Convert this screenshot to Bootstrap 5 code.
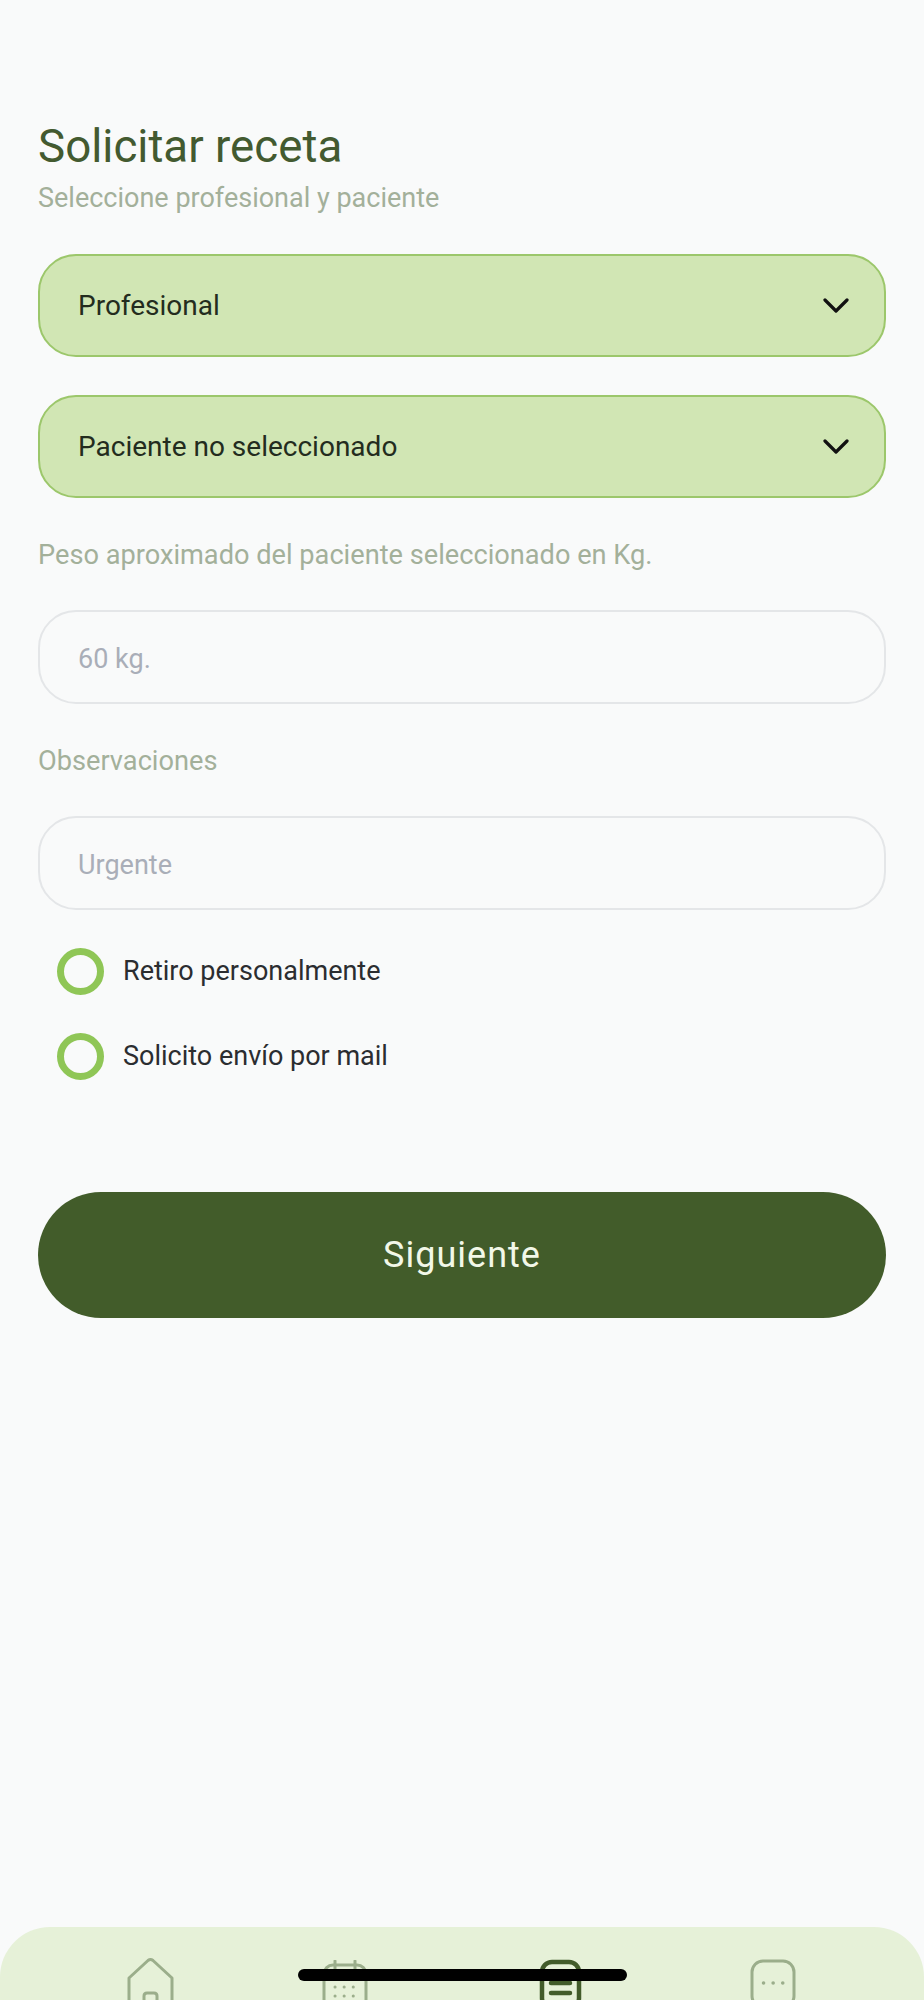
<!DOCTYPE html>
<html lang="es">
<head>
    <meta charset="UTF-8">
    <meta name="viewport" content="width=device-width, initial-scale=1.0">
    <title>Solicitar receta</title>
    <link href="https://cdn.jsdelivr.net/npm/bootstrap@5.3.3/dist/css/bootstrap.min.css" rel="stylesheet">
    <style>
        html, body { height: 2000px; }
        body { background: #f9fafa; font-family: Roboto, "Liberation Sans", sans-serif; overflow: hidden; }
        .screen { height: 2000px; position: relative; }
        .recipe-form { padding: 116px 38px 0; }

        .page-title { color: #435a30; font-size: 45.700px; font-weight: 400; line-height: 62px; margin: 0; }
        .page-sub { color: #a3b09a; font-size: 27px; line-height: 36px; margin: 2px 0 38px; }
        .field-label { color: #a3b09a; font-size: 27.200px; line-height: 36px; margin: 0; }
        .step-gap { margin-top: 38px; }
        .input-gap { margin-top: 37px; }
        .label-gap { margin-top: 39px; }

        /* green dropdowns */
        .form-select.pick-select {
            height: 103px; background-color: #d1e6b4; border: 2px solid #9cc76b; border-radius: 38px;
            color: #232c1e; font-size: 28px; padding: 0 80px 0 38px; margin-bottom: 38px;
            background-image: url("data:image/svg+xml,%3csvg xmlns='http://www.w3.org/2000/svg' viewBox='0 0 26 16'%3e%3cpath fill='none' stroke='%23111' stroke-width='3.2' stroke-linecap='round' stroke-linejoin='round' d='M2 2l11 11L24 2'/%3e%3c/svg%3e");
            background-size: 26px 16px; background-position: right 35px center;
        }
        .form-select.pick-select:last-of-type { margin-bottom: 39px; }

        .form-control.soft-input {
            height: 94px; background: #f9fafa; border: 2px solid #e4e6e8; border-radius: 38px;
            font-size: 27px; padding: 4px 38px 0;
        }
        .soft-input::placeholder { color: #a9aeb8; opacity: 1; }

        /* radios */
        .form-check.pick-radio { display: flex; align-items: center; gap: 19px; padding: 0 0 0 19px; margin-bottom: 0; min-height: 47px; }
        .form-check .form-check-input.pick-dot {
            float: none; width: 47px; height: 47px; margin: 0; flex: none;
            background-color: #f9fafa; border: 7px solid #8fc656;
        }
        .pick-radio .form-check-label { color: #2b2d30; font-size: 27px; }

        .btn.next-btn {
            display: block; width: 100%; height: 126px; margin-top: 112px; background: #425c2a; border: 0;
            border-radius: 63px; color: #f2f8e8; font-size: 36px; letter-spacing: 1px;
        }

        /* bottom navigation, cut off by the screen edge */
        .tab-bar {
            position: absolute; left: 0; right: 0; bottom: 0; height: 73px; background: #e6f1d8;
            border-radius: 50px 50px 0 0; overflow: hidden;
        }
        .tab-icon { position: absolute; top: 31px; fill: none; stroke: #9bae8b; stroke-width: 3; stroke-linecap: round; stroke-linejoin: round; }
        .tab-icon.is-active { stroke: #425c2a; stroke-width: 4.5; }
        .tab-home { left: 127px; top: 30px; }
        .tab-cal { left: 322px; top: 33px; }
        .tab-rx { left: 539px; top: 32px; }
        .tab-more { left: 750px; top: 32px; }
        .home-pill { position: absolute; left: 298px; top: 1969px; width: 329px; height: 12px; background: #000; border-radius: 6px; }
    </style>
</head>
<body>
    <div class="screen">
        <form class="recipe-form">
            <h1 class="page-title">Solicitar receta</h1>
            <p class="page-sub">Seleccione profesional y paciente</p>

            <select class="form-select pick-select">
                <option>Profesional</option>
            </select>
            <select class="form-select pick-select">
                <option>Paciente no seleccionado</option>
            </select>

            <p class="field-label">Peso aproximado del paciente seleccionado en Kg.</p>
            <input type="text" class="form-control soft-input input-gap" placeholder="60 kg.">

            <p class="field-label label-gap">Observaciones</p>
            <input type="text" class="form-control soft-input input-gap" placeholder="Urgente">

            <div class="form-check pick-radio step-gap">
                <input class="form-check-input pick-dot" type="radio" name="envio" id="retiro">
                <label class="form-check-label" for="retiro">Retiro personalmente</label>
            </div>
            <div class="form-check pick-radio step-gap">
                <input class="form-check-input pick-dot" type="radio" name="envio" id="mail">
                <label class="form-check-label" for="mail">Solicito envío por mail</label>
            </div>

            <button type="button" class="btn next-btn">Siguiente</button>
        </form>

        <nav class="tab-bar">
            <svg class="tab-icon tab-home" width="47" height="50" viewBox="0 0 47 50">
                <path d="M2 21L21 3.500q2.500-2 5 0L45 21V48H2z"/>
                <path d="M17 48V39q0-3 3-3h7q3 0 3 3v9"/>
            </svg>
            <svg class="tab-icon tab-cal" width="46" height="50" viewBox="0 0 46 50">
                <rect x="2" y="5" width="42" height="44" rx="9"/>
                <path d="M13 1v8M33 1v8"/>
                <path stroke-width="3" stroke-dasharray="0.1 9" d="M13 27h21M13 36h21"/>
            </svg>
            <svg class="tab-icon tab-rx is-active" width="43" height="50" viewBox="0 0 43 50">
                <rect x="3" y="3" width="37" height="46" rx="10"/>
                <path d="M12 24h19M12 34h19"/>
            </svg>
            <svg class="tab-icon tab-more" width="46" height="50" viewBox="0 0 46 50">
                <rect x="2" y="2" width="42" height="46" rx="11"/>
                <path stroke-width="3.500" stroke-dasharray="0.1 9.500" d="M13.500 24h20"/>
            </svg>
        </nav>
        <div class="home-pill"></div>
    </div>

    <script src="https://cdn.jsdelivr.net/npm/bootstrap@5.3.3/dist/js/bootstrap.bundle.min.js"></script>
</body>
</html>
